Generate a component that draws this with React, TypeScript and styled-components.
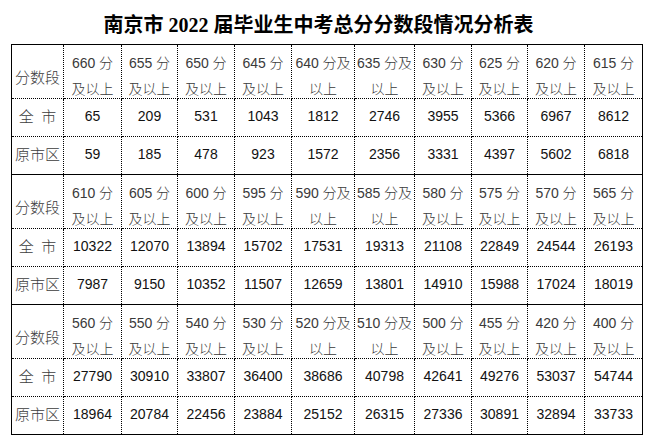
import React from 'react';
import styled, { createGlobalStyle, css } from 'styled-components';

const GlobalStyle = createGlobalStyle`
  html, body {
    margin: 0;
    padding: 0;
    background: #ffffff;
  }
`;

const Page = styled.div`
  width: 655px;
  height: 443px;
  box-sizing: border-box;
  padding: 12px 13px 0 11px;
  background: #ffffff;
  overflow: hidden;
`;

const Title = styled.h1`
  margin: 0 0 6px;
  padding-right: 16px;
  height: 26px;
  line-height: 26px;
  text-align: center;
  font-family: 'Liberation Serif', 'Noto Sans CJK SC', serif;
  font-size: 20px;
  font-weight: 700;
  color: #000000;
  white-space: pre;
`;

const Table = styled.table`
  width: 631px;
  table-layout: fixed;
  border-collapse: collapse;
  border: 1px solid #000000;
`;

const Row = styled.tr<{ $blockStart?: boolean }>`
  ${props =>
    props.$blockStart &&
    css`
      & > td {
        border-top: 1px solid #000000;
      }
    `}
`;

const Cell = styled.td`
  box-sizing: border-box;
  padding: 0;
  border: 1px dotted #000000;
  text-align: center;
  vertical-align: middle;
  white-space: nowrap;
  overflow: hidden;
`;

const LabelCell = styled(Cell)<{ $head?: boolean }>`
  height: ${props => (props.$head ? '53px' : '38px')};
  padding: ${props => (props.$head ? '11px 0 0' : '0 0 3px')};
  font-family: 'Noto Sans CJK SC', sans-serif;
  font-size: 15px;
  font-weight: 300;
  line-height: 20px;
  color: #3c3c3c;
`;

const HeadCell = styled(Cell)`
  height: 53px;
  padding-top: 5px;
  vertical-align: top;
  font-family: 'Liberation Sans', 'Noto Sans CJK SC', sans-serif;
  font-size: 14px;
  font-weight: 300;
  line-height: 26px;
  color: #3a3a3a;
`;

const Line = styled.div<{ $last?: boolean }>`
  height: ${props => (props.$last ? '22px' : '26px')};
`;

const NumCell = styled(Cell)`
  height: 38px;
  padding-bottom: 4px;
  font-family: 'Liberation Sans', sans-serif;
  font-size: 14px;
  line-height: 20px;
  color: #111111;
`;

const colWidths = [52, 58, 56, 57, 57, 63, 60, 57, 56, 57, 58];

type Block = {
  scores: number[];
  all: number[];
  city: number[];
};

const blocks: Block[] = [
  {
    scores: [660, 655, 650, 645, 640, 635, 630, 625, 620, 615],
    all: [65, 209, 531, 1043, 1812, 2746, 3955, 5366, 6967, 8612],
    city: [59, 185, 478, 923, 1572, 2356, 3331, 4397, 5602, 6818],
  },
  {
    scores: [610, 605, 600, 595, 590, 585, 580, 575, 570, 565],
    all: [10322, 12070, 13894, 15702, 17531, 19313, 21108, 22849, 24544, 26193],
    city: [7987, 9150, 10352, 11507, 12659, 13801, 14910, 15988, 17024, 18019],
  },
  {
    scores: [560, 550, 540, 530, 520, 510, 500, 455, 420, 400],
    all: [27790, 30910, 33807, 36400, 38686, 40798, 42641, 49276, 53037, 54744],
    city: [18964, 20784, 22456, 23884, 25152, 26315, 27336, 30891, 32894, 33733],
  },
];

// columns 5 and 6 are wider, so Word wrapped them as "分及 / 以上"
const wideCols = [4, 5];

const ScoreHead = ({ score, index }: { score: number; index: number }) => {
  const wide = wideCols.includes(index);
  return (
    <HeadCell>
      <Line>{wide ? `${score} 分及` : `${score} 分`}</Line>
      <Line $last>{wide ? '以上' : '及以上'}</Line>
    </HeadCell>
  );
};

export default function App() {
  return (
    <Page>
      <GlobalStyle />
      <Title>南京市 2022 届毕业生中考总分分数段情况分析表</Title>
      <Table>
        <colgroup>
          {colWidths.map((w, i) => (
            <col key={i} style={{ width: w }} />
          ))}
        </colgroup>
        <tbody>
          {blocks.map((block, b) => (
            <React.Fragment key={b}>
              <Row $blockStart={b > 0}>
                <LabelCell $head>分数段</LabelCell>
                {block.scores.map((s, i) => (
                  <ScoreHead key={s} score={s} index={i} />
                ))}
              </Row>
              <Row>
                <LabelCell>全{'\u2002'}市</LabelCell>
                {block.all.map((n, i) => (
                  <NumCell key={i}>{n}</NumCell>
                ))}
              </Row>
              <Row>
                <LabelCell>原市区</LabelCell>
                {block.city.map((n, i) => (
                  <NumCell key={i}>{n}</NumCell>
                ))}
              </Row>
            </React.Fragment>
          ))}
        </tbody>
      </Table>
    </Page>
  );
}
